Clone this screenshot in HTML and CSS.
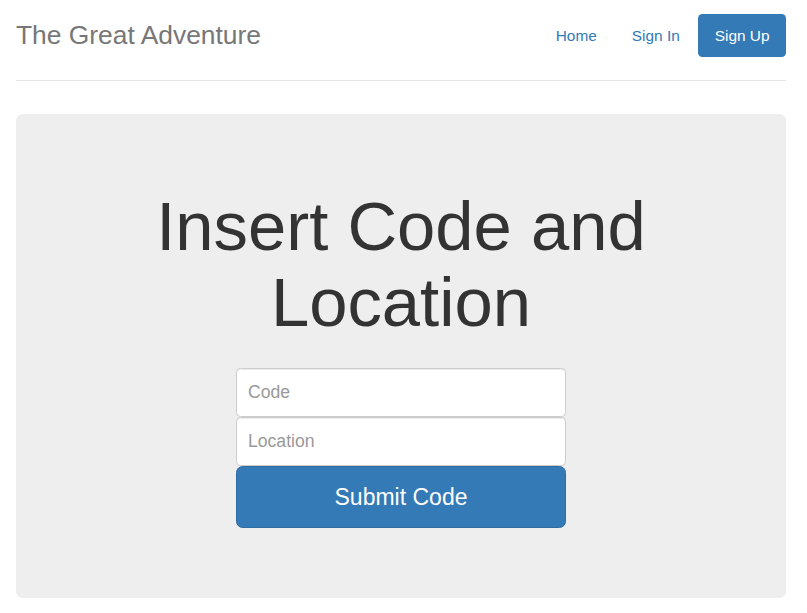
FILE: index.html
```html
<!DOCTYPE html>
<html lang="en">
<head>
<meta charset="utf-8">
<title>The Great Adventure</title>
<link rel="stylesheet" href="styles.css">
</head>
<body>
<div class="container">
  <header class="header">
    <h3 class="brand">The Great Adventure</h3>
    <nav>
      <ul class="nav-pills">
        <li><a href="#">Home</a></li>
        <li><a href="#">Sign In</a></li>
        <li class="active"><a href="#">Sign Up</a></li>
      </ul>
    </nav>
  </header>
  <main class="jumbotron">
    <h1 class="title">Insert Code and Location</h1>
    <form class="code-form">
      <input class="form-control" type="text" placeholder="Code">
      <input class="form-control" type="text" placeholder="Location">
      <button class="btn-submit" type="button">Submit Code</button>
    </form>
  </main>
</div>
</body>
</html>
```

FILE: styles.css
```css
* { box-sizing: border-box; }
html, body {
  margin: 0;
  padding: 0;
  background: #fff;
}
body {
  font-family: "Liberation Sans", Arial, Helvetica, sans-serif;
  font-size: 15.4px;
  color: #333;
  padding-top: 14px;
}
.container {
  width: 770px;
  margin-left: 16px;
}
.header {
  display: flex;
  justify-content: space-between;
  align-items: center;
  padding-bottom: 23px;
  border-bottom: 1px solid #e5e5e5;
}
.brand {
  margin: 0;
  font-size: 26.4px;
  font-weight: 400;
  line-height: 43px;
  color: #777;
}
.nav-pills {
  list-style: none;
  margin: 0;
  padding: 0;
  display: flex;
  gap: 2px;
}
.nav-pills a {
  display: block;
  padding: 11px 16.5px;
  line-height: 21px;
  font-size: 15.4px;
  color: #337ab7;
  text-decoration: none;
  border-radius: 4.4px;
}
.nav-pills .active a {
  background: #337ab7;
  color: #fff;
}
.jumbotron {
  margin-top: 33px;
  background: #eee;
  border-radius: 6.6px;
  padding: 53px 66px 53px;
  text-align: center;
  display: flex;
  flex-direction: column;
  align-items: center;
}
.title {
  margin: 22px 0 0;
  font-size: 68.8px;
  font-weight: 400;
  line-height: 76px;
  color: #333;
}
.code-form {
  width: 330px;
  margin: 27px 0 17px;
  display: flex;
  flex-direction: column;
}
.form-control {
  display: block;
  width: 100%;
  height: 49px;
  padding: 11px;
  font-family: inherit;
  font-size: 17.6px;
  color: #555;
  background: #fff;
  border: 1px solid #ccc;
  border-radius: 4.4px;
  box-shadow: inset 0 1px 1px rgba(0,0,0,.075);
  outline: none;
}
.form-control::placeholder { color: #999; }
.btn-submit {
  display: block;
  width: 100%;
  height: 62px;
  font-family: inherit;
  font-size: 23px;
  color: #fff;
  background: #337ab7;
  border: 1px solid #2e6da4;
  border-radius: 6.6px;
  cursor: pointer;
}
```
